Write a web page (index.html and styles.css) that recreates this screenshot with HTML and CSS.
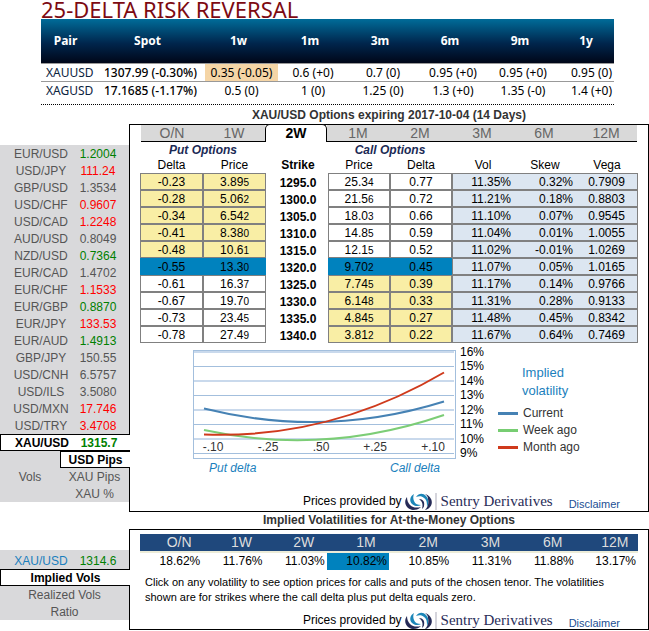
FILE: index.html
```html
<!DOCTYPE html>
<html lang="en">
<head>
    <meta charset="UTF-8">
    <meta name="viewport" content="width=device-width, initial-scale=1.0">
    <title>25-Delta Risk Reversal</title>
    <link rel="stylesheet" href="styles.css">
</head>
<body>
    <section class="risk">
        <h1>25-DELTA RISK REVERSAL</h1>
        <table class="risk-table">
            <colgroup>
                <col class="c-pair"><col class="c-spot"><col class="c-1w"><col class="c-mid"><col class="c-mid"><col class="c-mid"><col class="c-mid"><col class="c-1y">
            </colgroup>
            <thead>
                <tr><th>Pair</th><th>Spot</th><th>1w</th><th>1m</th><th>3m</th><th>6m</th><th>9m</th><th>1y</th></tr>
            </thead>
            <tbody>
                <tr><td>XAUUSD</td><td>1307.99 (-0.30%)</td><td class="mark">0.35 (-0.05)</td><td>0.6 (+0)</td><td>0.7 (0)</td><td>0.95 (+0)</td><td>0.95 (+0)</td><td>0.95 (0)</td></tr>
                <tr><td>XAGUSD</td><td>17.1685 (-1.17%)</td><td>0.5 (0)</td><td>1 (0)</td><td>1.25 (0)</td><td>1.3 (+0)</td><td>1.35 (-0)</td><td>1.4 (+0)</td></tr>
            </tbody>
        </table>
    </section>

    <svg class="defs" aria-hidden="true">
        <symbol id="logo" viewBox="0 0 27 18">
            <path fill="#262b57" d="M2 4C-2 9 1 16 8 17c4 0 6-1 8-3-4 1-8 1-11-2C3 10 2 7 2 4z"/>
            <path fill="#1c86b8" d="M9 1C5 3 4 8 7 11c2 2 6 3 9 1-3 0-6-1-7-4-1-2-1-5 0-7z"/>
            <path fill="#1c86b8" d="M11 4c3-4 7-4 10-1 3 3 3 7 1 11 0-4 0-7-3-9-2-2-5-2-8-1z"/>
            <path fill="#262b57" d="M20 1c6 2 9 8 5 13-1 1-3 3-5 3 3-3 4-7 3-11 0-2-1-4-3-5z"/>
            <path fill="#262b57" d="M14 6c4 0 6 3 5 7 0 1-1 2-2 3 1-4 1-7-3-10z"/>
        </symbol>
    </svg>

    <div class="block">
        <h2>XAU/USD Options expiring 2017-10-04 (14 Days)</h2>
        <nav class="side">
            <ul class="pairs">
                <li><a href="#"><span>EUR/USD</span><span class="up">1.2004</span></a></li>
                <li><a href="#"><span>USD/JPY</span><span class="down">111.24</span></a></li>
                <li><a href="#"><span>GBP/USD</span><span>1.3534</span></a></li>
                <li><a href="#"><span>USD/CHF</span><span class="down">0.9607</span></a></li>
                <li><a href="#"><span>USD/CAD</span><span class="down">1.2248</span></a></li>
                <li><a href="#"><span>AUD/USD</span><span>0.8049</span></a></li>
                <li><a href="#"><span>NZD/USD</span><span class="up">0.7364</span></a></li>
                <li><a href="#"><span>EUR/CAD</span><span>1.4702</span></a></li>
                <li><a href="#"><span>EUR/CHF</span><span class="down">1.1533</span></a></li>
                <li><a href="#"><span>EUR/GBP</span><span class="up">0.8870</span></a></li>
                <li><a href="#"><span>EUR/JPY</span><span class="down">133.53</span></a></li>
                <li><a href="#"><span>EUR/AUD</span><span class="up">1.4913</span></a></li>
                <li><a href="#"><span>GBP/JPY</span><span>150.55</span></a></li>
                <li><a href="#"><span>USD/CNH</span><span>6.5757</span></a></li>
                <li><a href="#"><span>USD/ILS</span><span>3.5080</span></a></li>
                <li><a href="#"><span>USD/MXN</span><span class="down">17.746</span></a></li>
                <li><a href="#"><span>USD/TRY</span><span class="down">3.4708</span></a></li>
                <li><a href="#" class="selected"><span>XAU/USD</span><span class="up">1315.7</span></a></li>
            </ul>
            <div class="units">
                <a href="#" class="vols">Vols</a>
                <ul>
                    <li><a href="#" class="selected">USD Pips</a></li>
                    <li><a href="#">XAU Pips</a></li>
                    <li><a href="#">XAU %</a></li>
                </ul>
            </div>
        </nav>

        <div class="panel">
            <div class="tabs">
                <a href="#">O/N</a><a href="#">1W</a><a href="#" class="active">2W</a><a href="#">1M</a><a href="#">2M</a><a href="#">3M</a><a href="#">6M</a><a href="#">12M</a>
            </div>
            <table class="options">
                <colgroup>
                    <col class="c-put"><col class="c-put"><col span="6">
                </colgroup>
                <thead>
                    <tr class="groups"><th colspan="2">Put Options</th><th></th><th colspan="2">Call Options</th><th colspan="3"></th></tr>
                    <tr><th>Delta</th><th>Price</th><th class="strike">Strike</th><th>Price</th><th>Delta</th><th>Vol</th><th>Skew</th><th>Vega</th></tr>
                </thead>
                <tbody>
                    <tr class="put"><td>-0.23</td><td>3.89<small>5</small></td><td>1295.0</td><td>25.3<small>4</small></td><td>0.77</td><td>11.35%</td><td>0.32%</td><td>0.7909</td></tr>
                    <tr class="put"><td>-0.28</td><td>5.06<small>2</small></td><td>1300.0</td><td>21.5<small>6</small></td><td>0.72</td><td>11.21%</td><td>0.18%</td><td>0.8803</td></tr>
                    <tr class="put"><td>-0.34</td><td>6.54<small>2</small></td><td>1305.0</td><td>18.0<small>3</small></td><td>0.66</td><td>11.10%</td><td>0.07%</td><td>0.9545</td></tr>
                    <tr class="put"><td>-0.41</td><td>8.38<small>0</small></td><td>1310.0</td><td>14.8<small>5</small></td><td>0.59</td><td>11.04%</td><td>0.01%</td><td>1.0055</td></tr>
                    <tr class="put"><td>-0.48</td><td>10.6<small>1</small></td><td>1315.0</td><td>12.1<small>5</small></td><td>0.52</td><td>11.02%</td><td>-0.01%</td><td>1.0269</td></tr>
                    <tr class="atm"><td>-0.55</td><td>13.3<small>0</small></td><td>1320.0</td><td>9.70<small>2</small></td><td>0.45</td><td>11.07%</td><td>0.05%</td><td>1.0165</td></tr>
                    <tr class="call"><td>-0.61</td><td>16.3<small>7</small></td><td>1325.0</td><td>7.74<small>5</small></td><td>0.39</td><td>11.17%</td><td>0.14%</td><td>0.9766</td></tr>
                    <tr class="call"><td>-0.67</td><td>19.7<small>0</small></td><td>1330.0</td><td>6.14<small>8</small></td><td>0.33</td><td>11.31%</td><td>0.28%</td><td>0.9133</td></tr>
                    <tr class="call"><td>-0.73</td><td>23.4<small>5</small></td><td>1335.0</td><td>4.84<small>5</small></td><td>0.27</td><td>11.48%</td><td>0.45%</td><td>0.8342</td></tr>
                    <tr class="call"><td>-0.78</td><td>27.4<small>9</small></td><td>1340.0</td><td>3.81<small>2</small></td><td>0.22</td><td>11.67%</td><td>0.64%</td><td>0.7469</td></tr>
                </tbody>
            </table>

            <div class="chart-row">
                <svg class="chart" width="296" height="134" viewBox="0 0 296 134">
                    <rect x="0.5" y="5.5" width="262" height="108" fill="#fff" stroke="#a3bfdd"/>
                    <g class="grid">
                        <path d="M1 7H261M1 36H261M1 65H261M1 94H261" stroke="#c9d9ec" stroke-width="2"/>
                        <path d="M1 21.5H261M1 50.5H261M1 79.5H261M1 108.5H261" stroke="#a3bfdd"/>
                    </g>
                    <g fill="none" stroke-width="2">
                        <path stroke="#4682b4" d="M11 63.5C91 83.5 171 81.5 251 56.5"/>
                        <path stroke="#7ccd76" d="M11 85C91 102.5 171 97.5 251 70"/>
                        <path stroke="#cf3a1c" d="M11 89.5C91 92.5 171 74.5 251 27.5"/>
                    </g>
                    <g class="x-labels">
                        <text x="20" y="106">-.10</text>
                        <text x="75" y="106">-.25</text>
                        <text x="128" y="106">.50</text>
                        <text x="182" y="106">+.25</text>
                        <text x="240" y="106">+.10</text>
                    </g>
                    <g class="y-labels">
                        <text x="267" y="11">16%</text>
                        <text x="267" y="25">15%</text>
                        <text x="267" y="40">14%</text>
                        <text x="267" y="54">13%</text>
                        <text x="267" y="69">12%</text>
                        <text x="267" y="83">11%</text>
                        <text x="267" y="98">10%</text>
                        <text x="267" y="112">9%</text>
                    </g>
                    <g class="sides">
                        <text x="16" y="127">Put delta</text>
                        <text x="197" y="127">Call delta</text>
                    </g>
                </svg>
                <div class="legend">
                    <h3>Implied<br>volatility</h3>
                    <ul>
                        <li class="current">Current</li>
                        <li class="week">Week ago</li>
                        <li class="month">Month ago</li>
                    </ul>
                </div>
            </div>

            <footer class="provider">
                <span>Prices provided by</span>
                <svg class="logo"><use href="#logo"/></svg>
                <span class="brand">Sentry Derivatives</span>
                <a href="#">Disclaimer</a>
            </footer>
        </div>
    </div>

    <div class="block vol-block">
        <h2>Implied Volatilities for At-the-Money Options</h2>
        <nav class="side">
            <ul class="pairs">
                <li><a href="#" class="current-pair"><span>XAU/USD</span><span class="up">1314.6</span></a></li>
            </ul>
            <ul class="modes">
                <li><a href="#" class="selected">Implied Vols</a></li>
                <li><a href="#">Realized Vols</a></li>
                <li><a href="#">Ratio</a></li>
            </ul>
        </nav>
        <div class="panel">
            <table class="vol-table">
                <thead>
                    <tr><th>O/N</th><th>1W</th><th>2W</th><th>1M</th><th>2M</th><th>3M</th><th>6M</th><th>12M</th></tr>
                </thead>
                <tbody>
                    <tr><td>18.62%</td><td>11.76%</td><td>11.03%</td><td class="picked">10.82%</td><td>10.85%</td><td>11.31%</td><td>11.88%</td><td>13.17%</td></tr>
                </tbody>
            </table>
            <p>Click on any volatility to see option prices for calls and puts of the chosen tenor. The volatilities shown are for strikes where the call delta plus put delta equals zero.</p>
            <footer class="provider">
                <span>Prices provided by</span>
                <svg class="logo"><use href="#logo"/></svg>
                <span class="brand">Sentry Derivatives</span>
                <a href="#">Disclaimer</a>
            </footer>
        </div>
    </div>
</body>
</html>
```
FILE: styles.css
```css
* {
    box-sizing: border-box;
}

body {
    margin: 0;
    background: #fff;
    color: #000;
    font-family: "Liberation Sans", Arial, sans-serif;
    font-size: 12px;
    line-height: 17px;
}

h1, h2, h3, p, ul {
    margin: 0;
    padding: 0;
}

ul {
    list-style: none;
}

a {
    color: inherit;
    text-decoration: none;
}

table {
    width: 100%;
    table-layout: fixed;
    border-collapse: separate;
    border-spacing: 0;
}

th, td {
    padding: 0;
    text-align: center;
    white-space: nowrap;
}

.defs {
    display: none;
}

/* risk reversal table */
.risk {
    margin: 0 35px 0 41px;
    border-bottom: 1px dotted #000;
    font-family: "Trebuchet MS", "Noto Sans", sans-serif;
}

.risk h1 {
    height: 19px;
    color: #7d0a12;
    font-size: 22px;
    font-weight: 400;
    line-height: 19px;
    white-space: nowrap;
}

.risk-table thead {
    background: linear-gradient(#006c99, #00264d 55%, #000618);
    color: #fff;
}

.risk-table th {
    height: 44px;
    padding: 0 6px 2px 0;
}

.risk-table th:last-child {
    padding-right: 0;
}

.risk-table td {
    height: 18px;
    border-top: 1px solid #999;
    line-height: 16px;
}

.risk-table tbody tr:last-child td {
    height: 23px;
    padding-bottom: 5px;
}

.risk-table td:first-child {
    padding-left: 5px;
    color: #0c2340;
    text-align: left;
}

.risk-table td:nth-child(2) {
    font-weight: 500;
}

.risk-table td:last-child {
    padding-right: 2px;
    text-align: right;
}

.risk-table .mark {
    background: #f5d5a6;
}

.c-pair { width: 55px; }
.c-spot { width: 109px; }
.c-1w { width: 73px; }
.c-mid { width: 70px; }
.c-1y { width: 56px; }
.c-put { width: 63px; }

/* sidebar + panel */
.block {
    display: grid;
    grid-template-columns: 129px 1fr;
    align-items: start;
}

.block h2 {
    grid-column: 2;
    padding-top: 2px;
    color: #333;
    font-size: 12px;
    text-align: center;
}

.vol-block h2 {
    padding-top: 0;
}

.side {
    margin-top: 21px;
    background: #d9d9db;
    color: #555;
    text-align: center;
}

.side a {
    display: block;
    height: 17px;
    line-height: 18px;
}

.side .pairs a {
    display: grid;
    grid-template-columns: 64px 50px;
    padding-left: 9px;
}

.side .up {
    color: #008000;
}

.side .down {
    color: #f00;
}

.side a.selected {
    position: relative;
    margin-right: -1px;
    border: 1px solid #000;
    border-right: 0;
    background: #fff;
    color: #000;
    font-weight: 700;
    line-height: 16px;
}

.units {
    display: grid;
    grid-template-columns: 60px 1fr;
    align-items: center;
}

.side .pairs .current-pair {
    height: 19px;
    color: #1b7fbd;
    line-height: 22px;
}

.panel {
    padding: 0 10px;
    border: 1px solid #000;
}

.tabs {
    display: grid;
    grid-template-columns: repeat(8, 1fr);
    margin: 0 1px;
}

.tabs a {
    height: 17px;
    border-bottom: 1px solid #000;
    background: #d9d9d9;
    color: #666;
    font-size: 14px;
    text-align: center;
}

.tabs .active {
    height: 18px;
    margin-top: -1px;
    border: 1px solid #000;
    border-bottom: 0;
    border-radius: 5px 5px 0 0;
    background: #fff;
    color: #000;
    font-weight: 700;
}

.options th {
    height: 16px;
    font-weight: 400;
    line-height: 15px;
}

.options .groups th {
    height: 15px;
    padding-top: 1px;
    color: #1b2a55;
    font-style: italic;
    font-weight: 700;
    line-height: 14px;
}

.options th.strike {
    padding-left: 2px;
    font-weight: 700;
}

.options td {
    height: 17px;
    padding-top: 1px;
    border: 1px solid #808080;
    line-height: 14px;
}

.options td:nth-child(3) {
    padding: 3px 0 0 2px;
    border: 0;
    font-weight: 700;
}

.options td:nth-child(n+6) {
    border-right: 0;
    border-left: 0;
    background: #dce6f1;
}

.options td:nth-child(6) {
    border-left: 1px solid #808080;
}

.options td:nth-child(6),
.options td:nth-child(7) {
    padding-right: 3px;
    text-align: right;
}

.options td:last-child {
    border-right: 1px solid #808080;
}

.options small {
    font-size: 10px;
    line-height: 10px;
}

.put td:nth-child(-n+2),
.call td:nth-child(4),
.call td:nth-child(5) {
    background: #f9eea5;
}

.options .atm td:nth-child(-n+2),
.options .atm td:nth-child(4),
.options .atm td:nth-child(5) {
    border-color: #0082be;
    background: #0082be;
}

/* smile chart */
.chart-row {
    display: flex;
    padding: 2px 0 12px 53px;
}

.chart text {
    font-size: 12px;
}

.chart .x-labels text {
    fill: #333;
    text-anchor: middle;
}

.chart .sides text {
    fill: #1b7fbd;
    font-style: italic;
}

.legend {
    padding: 19px 0 0 9px;
    color: #333;
}

.legend h3 {
    padding-left: 24px;
    color: #1b7fbd;
    font-size: 13px;
    font-weight: 400;
    line-height: 18px;
}

.legend ul {
    padding-top: 5px;
}

.legend li {
    display: flex;
    align-items: center;
    gap: 5px;
}

.legend li::before {
    content: "";
    width: 20px;
    height: 3px;
    background: #4682b4;
}

.legend .week::before {
    background: #77cd72;
}

.legend .month::before {
    background: #cf3a1c;
}

.provider {
    display: flex;
    justify-content: flex-end;
    align-items: center;
    height: 20px;
    padding: 1px 18px 0 0;
}

.logo {
    width: 27px;
    height: 18px;
    margin: 0 3px;
}

.brand {
    padding-left: 4px;
    border-left: 2px solid #d5d5dc;
    color: #2a2c58;
    font-family: "Liberation Serif", Georgia, serif;
    font-size: 15px;
}

.provider a {
    margin-left: 16px;
    padding-top: 5px;
    color: #1c4f94;
    font-size: 11px;
    line-height: 15px;
}

/* at-the-money volatilities */
.vol-table {
    margin-top: 4px;
}

.vol-table th {
    height: 19px;
    padding-left: 16px;
    border-bottom: 2px solid #ececd8;
    background: #1f487c;
    color: #ddd;
    font-size: 14px;
    font-weight: 400;
}

.vol-table td {
    height: 17px;
    padding-right: 2px;
    text-align: right;
}

.vol-table .picked {
    background: #0082be;
}

.vol-block p {
    padding: 5px 5px 6px;
    font-size: 11px;
    line-height: 15px;
}

.vol-block .provider {
    height: 18px;
}
```
